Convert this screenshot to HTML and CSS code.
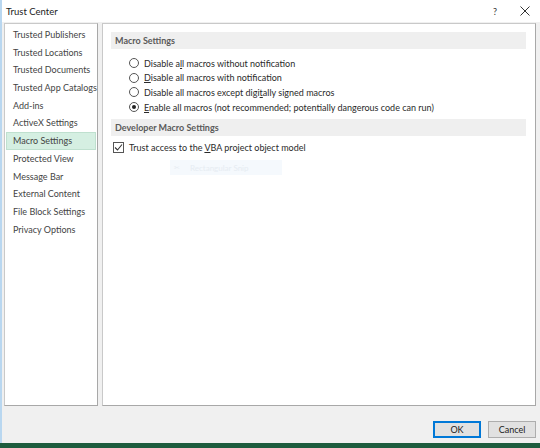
FILE: index.html
```html
<!DOCTYPE html>
<html>
<head>
<meta charset="utf-8">
<link rel="stylesheet" href="styles.css">
</head>
<body>
<div class="dialog">
  <div class="titlebar">
    <span class="title">Trust Center</span>
    <span class="help">?</span>
    <span class="close">
      <svg width="10" height="10" viewBox="0 0 10 10"><path d="M0.5 0.5L9.5 9.5M9.5 0.5L0.5 9.5" stroke="#333" stroke-width="1" fill="none"/></svg>
    </span>
  </div>
  <div class="main">
    <ul class="nav">
      <li>Trusted Publishers</li>
      <li>Trusted Locations</li>
      <li>Trusted Documents</li>
      <li>Trusted App Catalogs</li>
      <li>Add-ins</li>
      <li>ActiveX Settings</li>
      <li class="sel">Macro Settings</li>
      <li>Protected View</li>
      <li>Message Bar</li>
      <li>External Content</li>
      <li>File Block Settings</li>
      <li>Privacy Options</li>
    </ul>
    <div class="content">
      <div class="section">Macro Settings</div>
      <div class="radios">
        <div class="opt"><span class="radio"></span><span>Disable a<u>l</u>l macros without notification</span></div>
        <div class="opt"><span class="radio"></span><span><u>D</u>isable all macros with notification</span></div>
        <div class="opt"><span class="radio"></span><span>Disable all macros except digi<u>t</u>ally signed macros</span></div>
        <div class="opt"><span class="radio on"></span><span><u>E</u>nable all macros (not recommended; potentially dangerous code can run)</span></div>
      </div>
      <div class="section">Developer Macro Settings</div>
      <div class="check-row">
        <span class="checkbox">
          <svg width="11" height="11" viewBox="0 0 11 11"><path d="M2 5.5L4.5 8L9 2.5" stroke="#333" stroke-width="1.1" fill="none"/></svg>
        </span>
        <span>Trust access to the <u>V</u>BA project object model</span>
      </div>
      <div class="ghost"><span class="ghost-icon">✂</span><span>Rectangular Snip</span></div>
    </div>
  </div>
  <div class="footer">
    <button class="btn ok">OK</button>
    <button class="btn">Cancel</button>
  </div>
  <div class="greenbar"></div>
</div>
</body>
</html>
```
FILE: styles.css
```css
* { box-sizing: border-box; }
html, body { margin: 0; padding: 0; }
body {
  width: 540px;
  height: 448px;
  overflow: hidden;
  font-family: Lato, "Noto Sans", sans-serif;
  font-size: 9px;
  color: #333;
  background: #f0f0f0;
}
.dialog {
  width: 540px;
  height: 448px;
  display: flex;
  flex-direction: column;
  background: #f0f0f0;
  border-left: 2px solid #b9d7f0;
}
.titlebar {
  height: 22px;
  background: #fff;
  display: flex;
  align-items: center;
  padding-left: 4px;
  flex: none;
}
.title { flex: 1; color: #222; font-size: 9.5px; }
.help { width: 30px; text-align: center; color: #333; }
.close { width: 30px; display: flex; justify-content: center; align-items: center; }
.main {
  flex: 1;
  display: flex;
  gap: 4px;
  padding: 1px 4px 0 2px;
  min-height: 0;
}
.nav {
  list-style: none;
  margin: 0;
  padding: 2px 1px 0 1px;
  width: 94px;
  background: #fff;
  border: 1px solid #c9c9c9;
  border-right-color: #a8a8a8;
  border-bottom-color: #a8a8a8;
}
.nav li {
  height: 17.7px;
  line-height: 17.7px;
  padding-left: 7px;
  white-space: nowrap;
  color: #444;
}
.nav li.sel {
  background: #d5efe2;
  border: 1px solid #bfe0cf;
  line-height: 15.7px;
  padding-left: 6px;
}
.content {
  flex: 1;
  background: #fff;
  border: 1px solid #c9c9c9;
  border-right-color: #a8a8a8;
  border-bottom-color: #a8a8a8;
  padding: 8px 9px 0 8px;
}
.section {
  height: 17px;
  line-height: 17px;
  background: #efefef;
  padding-left: 4px;
  font-weight: 700;
  color: #5a5a5a;
}
.radios {
  padding: 7px 0 5px 18px;
}
.opt {
  display: flex;
  align-items: center;
  gap: 5px;
  height: 14.6px;
  color: #2a2a2a;
}
.radio {
  width: 10px;
  height: 10px;
  border: 1px solid #555;
  border-radius: 50%;
  flex: none;
  position: relative;
}
.radio.on::after {
  content: "";
  position: absolute;
  left: 2px; top: 2px;
  width: 4px; height: 4px;
  border-radius: 50%;
  background: #222;
}
.check-row {
  display: flex;
  align-items: center;
  gap: 5px;
  padding: 4px 0 0 2px;
  height: 19px;
  color: #2a2a2a;
}
.checkbox {
  width: 11px;
  height: 11px;
  border: 1px solid #555;
  display: flex;
  flex: none;
}
.checkbox svg { margin: -1px; }
.ghost {
  margin: 5px 0 0 59px;
  width: 112px;
  height: 15px;
  background: #f5f9fd;
  display: flex;
  align-items: center;
  gap: 10px;
  padding-left: 4px;
  color: #e6ecf2;
  font-size: 8px;
}
.ghost-icon { font-size: 7px; }
.footer {
  height: 37px;
  flex: none;
  display: flex;
  justify-content: flex-end;
  align-items: flex-start;
  gap: 7px;
  padding-right: 4px;
  padding-top: 15px;
}
.btn {
  width: 48px;
  height: 17px;
  font-family: inherit;
  font-size: 9px;
  color: #222;
  background: #e1e1e1;
  border: 1px solid #adadad;
  padding: 0;
}
.btn.ok {
  border: 1px solid #0078d7;
  box-shadow: inset 0 0 0 1px #0078d7;
}
.greenbar {
  height: 5px;
  flex: none;
  background: #1d5c3e;
  margin-left: -2px;
}
```
